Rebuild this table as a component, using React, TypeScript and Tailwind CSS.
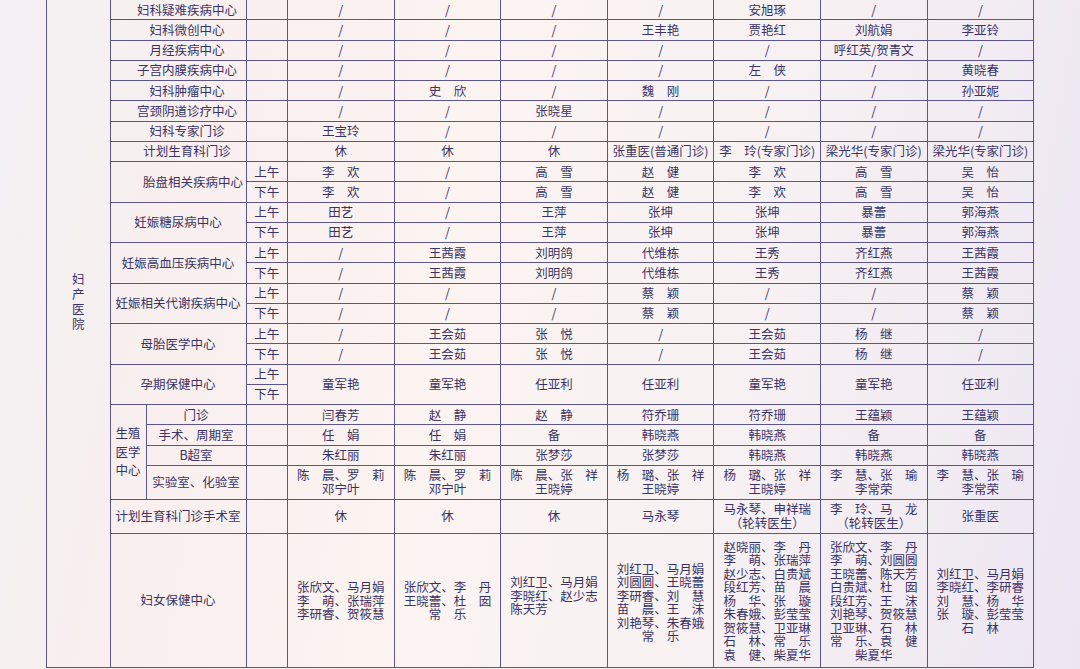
import React from 'react';

const B = 'border-r border-b border-[#5c558e]';

type C = string | string[];

function Day({ c, span2, left, extra }: { c: C; span2?: boolean; left?: boolean; extra?: string }) {
  const lines = Array.isArray(c) ? c : [c];
  return (
    <div className={`${B} flex items-center justify-center ${span2 ? 'row-span-2' : ''} ${extra ?? ''}`}>
      <div className={left ? 'text-left' : 'text-center'}>
        {lines.map((l, i) => (
          <div key={i} className="whitespace-nowrap">
            {l}
          </div>
        ))}
      </div>
    </div>
  );
}

const simpleRows: [string, C[]][] = [
  ['妇科疑难疾病中心', ['/', '/', '/', '/', '安旭琢', '/', '/']],
  ['妇科微创中心', ['/', '/', '/', '王丰艳', '贾艳红', '刘航娟', '李亚铃']],
  ['月经疾病中心', ['/', '/', '/', '/', '/', '呼红英/贺青文', '/']],
  ['子宫内膜疾病中心', ['/', '/', '/', '/', '左　侠', '/', '黄晓春']],
  ['妇科肿瘤中心', ['/', '史　欣', '/', '魏　刚', '/', '/', '孙亚妮']],
  ['宫颈阴道诊疗中心', ['/', '/', '张晓星', '/', '/', '/', '/']],
  ['妇科专家门诊', ['王宝玲', '/', '/', '/', '/', '/', '/']],
  ['计划生育科门诊', ['休', '休', '休', '张重医(普通门诊)', '李　玲(专家门诊)', '梁光华(专家门诊)', '梁光华(专家门诊)']],
];

const pairRows: [string, string, C[]][] = [
  ['胎盘相关疾病中心', 'pl-[30px]', ['李　欢', '/', '高　雪', '赵　健', '李　欢', '高　雪', '吴　怡']],
  ['妊娠糖尿病中心', '', ['田艺', '/', '王萍', '张坤', '张坤', '暴蕾', '郭海燕']],
  ['妊娠高血压疾病中心', '', ['/', '王茜霞', '刘明鸽', '代维栋', '王秀', '齐红燕', '王茜霞']],
  ['妊娠相关代谢疾病中心', '', ['/', '/', '/', '蔡　颖', '/', '/', '蔡　颖']],
  ['母胎医学中心', '', ['/', '王会茹', '张　悦', '/', '王会茹', '杨　继', '/']],
];

const yunqi: C[] = ['童军艳', '童军艳', '任亚利', '任亚利', '童军艳', '童军艳', '任亚利'];

const shengzhi: [string, C[]][] = [
  ['门诊', ['闫春芳', '赵　静', '赵　静', '符乔珊', '符乔珊', '王蕴颖', '王蕴颖']],
  ['手术、周期室', ['任　娟', '任　娟', '备', '韩晓燕', '韩晓燕', '备', '备']],
  ['B超室', ['朱红丽', '朱红丽', '张梦莎', '张梦莎', '韩晓燕', '韩晓燕', '韩晓燕']],
  [
    '实验室、化验室',
    [
      ['陈　晨、罗　莉', '邓宁叶'],
      ['陈　晨、罗　莉', '邓宁叶'],
      ['陈　晨、张　祥', '王晓婷'],
      ['杨　璐、张　祥', '王晓婷'],
      ['杨　璐、张　祥', '王晓婷'],
      ['李　慧、张　瑜', '李常荣'],
      ['李　慧、张　瑜', '李常荣'],
    ],
  ],
];

const jihua: C[] = ['休', '休', '休', '马永琴', ['马永琴、申祥瑞', '（轮转医生）'], ['李　玲、马　龙', '（轮转医生）'], '张重医'];

const fubao: C[] = [
  ['张欣文、马月娟', '李　萌、张瑞萍', '李研睿、贺筱慧'],
  ['张欣文、李　丹', '王晓蕾、杜　囡', '常　乐'],
  ['刘红卫、马月娟', '李晓红、赵少志', '陈天芳'],
  ['刘红卫、马月娟', '刘圆圆、王晓蕾', '李研睿、刘　慧', '苗　晨、王　沫', '刘艳琴、朱春娥', '常　乐'],
  [
    '赵晓丽、李　丹',
    '李　萌、张瑞萍',
    '赵少志、白贵斌',
    '段红芳、苗　晨',
    '杨　华、张　璇',
    '朱春娥、彭莹莹',
    '贺筱慧、卫亚琳',
    '石　林、常　乐',
    '袁　健、柴夏华',
  ],
  [
    '张欣文、李　丹',
    '李　萌、刘圆圆',
    '王晓蕾、陈天芳',
    '白贵斌、杜　囡',
    '段红芳、王　沫',
    '刘艳琴、贺筱慧',
    '卫亚琳、石　林',
    '常　乐、袁　健',
    '柴夏华',
  ],
  ['刘红卫、马月娟', '李晓红、李研睿', '刘　慧、杨　华', '张　璇、彭莹莹', '石　林'],
];

export default function App() {
  const cells: React.ReactNode[] = [];
  let k = 0;

  cells.push(
    <div key={k++} className={`row-span-26 ${B} flex items-center justify-center pb-[64px]`}>
      <div className="flex flex-col items-center leading-[15px]">
        {'妇产医院'.split('').map((ch, i) => (
          <span key={i}>{ch}</span>
        ))}
      </div>
    </div>
  );

  simpleRows.forEach(([name, days]) => {
    cells.push(
      <div key={k++} className={`col-span-2 ${B} flex items-center justify-center pl-[18px] whitespace-nowrap`}>
        {name}
      </div>
    );
    cells.push(<div key={k++} className={B} />);
    days.forEach((d) => cells.push(<Day key={k++} c={d} />));
  });

  pairRows.forEach(([name, pad, days]) => {
    cells.push(
      <div key={k++} className={`col-span-2 row-span-2 ${B} flex items-center justify-center whitespace-nowrap ${pad}`}>
        {name}
      </div>
    );
    cells.push(
      <div key={k++} className={`${B} flex items-center justify-center`}>
        上午
      </div>
    );
    days.forEach((d) => cells.push(<Day key={k++} c={d} />));
    cells.push(
      <div key={k++} className={`${B} flex items-center justify-center`}>
        下午
      </div>
    );
    days.forEach((d) => cells.push(<Day key={k++} c={d} />));
  });

  cells.push(
    <div key={k++} className={`col-span-2 row-span-2 ${B} flex items-center justify-center whitespace-nowrap`}>
      孕期保健中心
    </div>
  );
  cells.push(
    <div key={k++} className={`${B} flex items-center justify-center`}>
      上午
    </div>
  );
  yunqi.forEach((d) => cells.push(<Day key={k++} c={d} span2 />));
  cells.push(
    <div key={k++} className={`${B} flex items-center justify-center`}>
      下午
    </div>
  );

  cells.push(
    <div key={k++} className={`row-span-4 ${B} flex items-center justify-center`}>
      <div className="text-center leading-[18.5px]">
        <div>生殖</div>
        <div>医学</div>
        <div>中心</div>
      </div>
    </div>
  );
  shengzhi.forEach(([name, days]) => {
    cells.push(
      <div key={k++} className={`${B} flex items-center justify-center whitespace-nowrap`}>
        {name}
      </div>
    );
    cells.push(<div key={k++} className={B} />);
    days.forEach((d) => cells.push(<Day key={k++} c={d} />));
  });

  cells.push(
    <div key={k++} className={`col-span-2 ${B} flex items-center justify-center whitespace-nowrap`}>
      计划生育科门诊手术室
    </div>
  );
  cells.push(<div key={k++} className={B} />);
  jihua.forEach((d) => cells.push(<Day key={k++} c={d} />));

  cells.push(
    <div key={k++} className={`col-span-2 ${B} flex items-center justify-center whitespace-nowrap`}>
      妇女保健中心
    </div>
  );
  cells.push(<div key={k++} className={B} />);
  fubao.forEach((d, i) =>
    cells.push(
      <Day
        key={k++}
        c={d}
        left={i === 2}
        extra={`leading-[13.5px] ${i === 2 ? 'pb-[10px]' : i === 3 ? 'pt-[4px]' : ''}`}
      />
    )
  );

  return (
    <div className="w-[1080px] h-[669px] overflow-hidden bg-[linear-gradient(100deg,#f3f1f4_0%,#f8efee_18%,#fbf4f1_42%,#f7f1f3_68%,#ede6f2_100%)] font-['Noto_Sans_CJK_SC',sans-serif] text-[12.5px] leading-[14px] text-[#3a3366]">
      <div className="ml-[46px] w-[987.2px] grid grid-cols-[63.5px_36px_100px_41.5px_repeat(7,106.6px)] grid-rows-[repeat(23,20.25px)_34px_34px_134px] border-l border-[#5c558e]">
        {cells}
      </div>
    </div>
  );
}
